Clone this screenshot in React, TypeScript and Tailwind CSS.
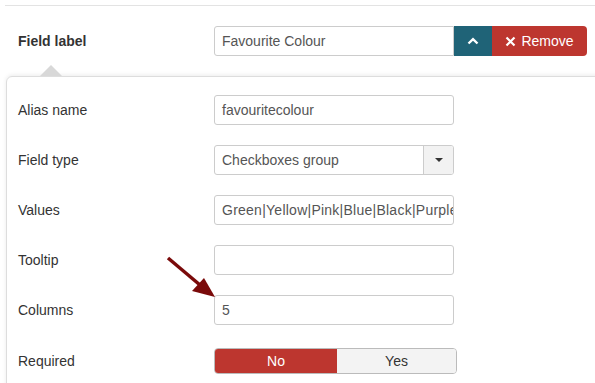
import React from 'react';

const rows = [
  { label: 'Alias name', value: 'favouritecolour' },
  { label: 'Field type', value: 'Checkboxes group', select: true },
  { label: 'Values', value: 'Green|Yellow|Pink|Blue|Black|Purple|Orange', wide: true },
  { label: 'Tooltip', value: '' },
  { label: 'Columns', value: '5' },
];

function TextBox({ value, select, wide }: { value: string; select?: boolean; wide?: boolean }) {
  return (
    <div className="flex h-[30px] w-[240px] items-stretch overflow-hidden rounded-[3px] border border-[#ccc] bg-white">
      <div className={`flex-1 overflow-hidden whitespace-nowrap px-[7px] leading-[28px] text-[#555] ${wide ? 'tracking-[0.25px]' : ''}`}>{value}</div>
      {select && (
        <div className="flex w-[30px] items-center justify-center border-l border-[#ccc] bg-[#f2f2f2]">
          <span className="h-0 w-0 border-x-[4px] border-t-[4px] border-x-transparent border-t-[#333]" />
        </div>
      )}
    </div>
  );
}

export default function App() {
  return (
    <div className="relative h-[383px] w-[595px] overflow-hidden bg-white font-['Liberation_Sans',Arial,sans-serif] text-[14px] text-[#333]">
      <div className="ml-[5px] mt-[5px] border-t border-[#e3e3e3] pt-[20px]">
        <div className="flex h-[30px] items-center">
          <div className="w-[209px] pl-[13px] font-bold">Field label</div>
          <div className="flex h-[30px]">
            <div className="w-[240px] rounded-l-[3px] border border-[#ccc] px-[7px] leading-[28px] text-[#555]">Favourite Colour</div>
            <div className="flex w-[38px] items-center justify-center bg-[#1f6377]">
              <svg width="12" height="8" viewBox="0 0 12 8">
                <path d="M1.5 6.5 L6 2.2 L10.5 6.5" fill="none" stroke="white" strokeWidth="2.4" />
              </svg>
            </div>
            <div className="flex w-[95px] items-center justify-center gap-[5px] rounded-r-[4px] bg-[#bd362f] text-white">
              <svg width="11" height="11" viewBox="0 0 11 11">
                <path d="M1.5 1.5 L9.5 9.5 M9.5 1.5 L1.5 9.5" stroke="white" strokeWidth="2.2" />
              </svg>
              <span>Remove</span>
            </div>
          </div>
        </div>
      </div>

      <div className="relative ml-[6px] mt-[20px] w-[620px]">
        <span className="absolute left-[34px] top-[-11px] h-0 w-0 border-x-[11px] border-b-[11px] border-x-transparent border-b-[#d8d8d8]" />
        <div className="rounded-tl-[6px] border border-[#ddd] pl-[11px] pt-[18px] shadow-[0_-1px_4px_rgba(0,0,0,0.08)]">
          <div className="flex flex-col gap-[20px]">
            {rows.map((r) => (
              <div key={r.label} className="flex items-center">
                <div className="w-[196px]">{r.label}</div>
                <TextBox value={r.value} select={r.select} wide={r.wide} />
              </div>
            ))}
            <div className="mt-[3px] flex items-center pb-[20px]">
              <div className="w-[196px]">Required</div>
              <div className="flex h-[26px] w-[243px] overflow-hidden rounded-[4px] border border-[#bbb]">
                <div className="flex w-[122px] items-center justify-center bg-[#bd362f] text-white">No</div>
                <div className="flex flex-1 items-center justify-center bg-[#f3f3f3] text-[#333]">Yes</div>
              </div>
            </div>
          </div>
        </div>
      </div>

      <svg className="absolute left-0 top-0" width="595" height="383" viewBox="0 0 595 383">
        <path d="M168 258 L200 285" stroke="#7a0a0a" strokeWidth="3.5" />
        <path d="M215 297 L192 291 L204 278 Z" fill="#7a0a0a" />
      </svg>
    </div>
  );
}
